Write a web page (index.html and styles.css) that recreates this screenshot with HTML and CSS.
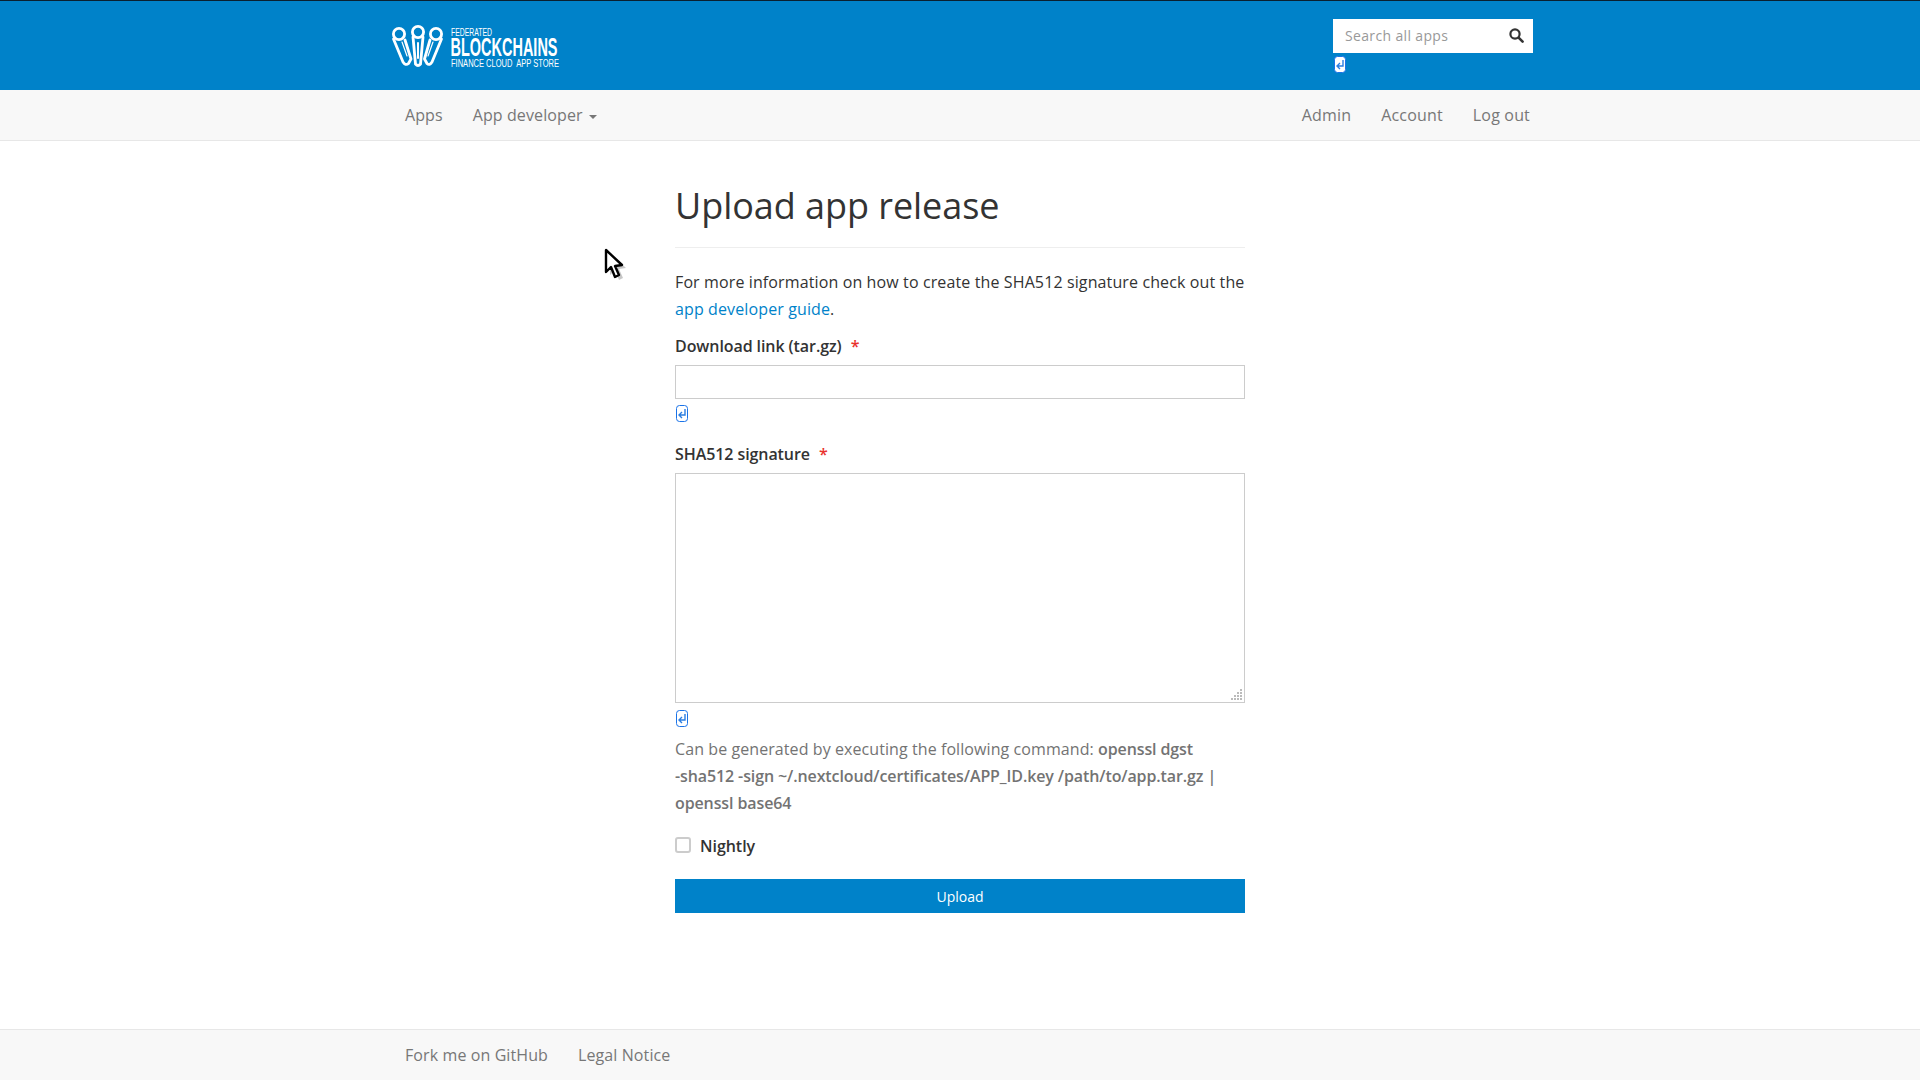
FILE: index.html
```html
<!DOCTYPE html>
<html lang="en">
<head>
<meta charset="utf-8">
<title>Upload app release</title>
<link rel="stylesheet" href="styles.css">
</head>
<body>
<header class="brand">
  <div class="container brand-row">
    <svg class="logo" width="220" height="46" viewBox="0 0 220 46" aria-label="Federated Blockchains">
      <g fill="none" stroke="#fff" stroke-width="2.8" stroke-linejoin="round" stroke-linecap="round">
        <circle cx="8" cy="9" r="5.6"/><circle cx="27" cy="7" r="5.6"/><circle cx="45" cy="9" r="5.6"/>
        <path d="M2.5 14 L12 37 Q14.5 41 17.5 38.5 L20 34 L14 15"/>
        <path d="M50.5 14 L41 37 Q38.5 41 36 38.5 L33.5 34 L39 15"/>
        <path d="M22 12 L24.5 39 Q27 42 29.5 39 L32 12"/>
        <path d="M27 18 L27 33" stroke-width="2"/>
        <path d="M11 17 L16 31" stroke-width="1.2"/>
        <path d="M42 17 L37 31" stroke-width="1.2"/>
      </g>
      <g fill="#fff" font-family="'Liberation Sans', sans-serif">
        <text x="60" y="11" font-size="10" textLength="41" lengthAdjust="spacingAndGlyphs">FEDERATED</text>
        <text x="59.5" y="31" font-size="25" font-weight="700" textLength="107" lengthAdjust="spacingAndGlyphs">BLOCKCHAINS</text>
        <text x="60" y="42" font-size="10" textLength="108" lengthAdjust="spacingAndGlyphs" xml:space="preserve">FINANCE CLOUD  APP STORE</text>
      </g>
    </svg>
    <form class="search">
      <div class="search-box">
        <input class="search-input" type="text" placeholder="Search all apps">
        <svg class="search-icon" width="15" height="15" viewBox="0 0 15 15"><circle cx="6" cy="6" r="4.6" fill="none" stroke="#333" stroke-width="2.2"/><path d="M9.6 9.6 L13.6 13.6" stroke="#333" stroke-width="2.6" stroke-linecap="round"/></svg>
      </div>
      <svg class="pm-icon pm-icon-search" width="12" height="17" viewBox="0 0 12 17"><rect x=".5" y=".5" width="11" height="16" rx="3" fill="#fff" stroke="#1a73e8"/><path d="M9 4v6H4M6 7l-3 3 3 3" fill="none" stroke="#2a7de1" stroke-width="1.4"/></svg>
    </form>
  </div>
</header>
<nav class="navbar">
  <div class="container nav-row">
    <ul class="nav">
      <li><a href="#">Apps</a></li>
      <li><a href="#">App developer <span class="caret"></span></a></li>
    </ul>
    <ul class="nav nav-right">
      <li><a href="#">Admin</a></li>
      <li><a href="#">Account</a></li>
      <li><a href="#">Log out</a></li>
    </ul>
  </div>
</nav>
<main class="content">
  <svg class="cursor" width="26" height="36" viewBox="0 0 26 36"><path d="M3 3 L3 25 L8 20 L12 30 L16 28 L12 19 L19 18 Z" fill="#999" opacity=".55" transform="translate(3 2)"/><path d="M2 2 L2 24 L7 19 L11 29 L15 27 L11 18 L18 17 Z" fill="#fff" stroke="#000" stroke-width="2.4" stroke-linejoin="round"/></svg>
  <section class="panel">
    <h1 class="title">Upload app release</h1>
    <p class="intro">For more information on how to create the SHA512 signature check out the <a href="#">app developer guide</a>.</p>
    <form>
      <label class="label">Download link (tar.gz) <span class="req">*</span></label>
      <input class="field" type="text">
      <svg class="pm-icon" width="12" height="17" viewBox="0 0 12 17"><rect x=".5" y=".5" width="11" height="16" rx="3" fill="#fff" stroke="#1a73e8"/><path d="M9 4v6H4M6 7l-3 3 3 3" fill="none" stroke="#2a7de1" stroke-width="1.4"/></svg>
      <label class="label label-gap">SHA512 signature <span class="req">*</span></label>
      <div class="area-wrap">
        <textarea class="area"></textarea>
        <svg class="grip" width="12" height="12" viewBox="0 0 12 12" fill="#bbb"><rect x="9" width="2" height="2"/><rect x="6" y="3" width="2" height="2"/><rect x="9" y="3" width="2" height="2"/><rect x="3" y="6" width="2" height="2"/><rect x="6" y="6" width="2" height="2"/><rect x="9" y="6" width="2" height="2"/><rect y="9" width="2" height="2"/><rect x="3" y="9" width="2" height="2"/><rect x="6" y="9" width="2" height="2"/><rect x="9" y="9" width="2" height="2"/></svg>
      </div>
      <svg class="pm-icon pm-icon-area" width="12" height="17" viewBox="0 0 12 17"><rect x=".5" y=".5" width="11" height="16" rx="3" fill="#fff" stroke="#1a73e8"/><path d="M9 4v6H4M6 7l-3 3 3 3" fill="none" stroke="#2a7de1" stroke-width="1.4"/></svg>
      <p class="help">Can be generated by executing the following command: <b>openssl dgst <span class="nobr">-sha512</span> -sign ~/.nextcloud/certificates/APP_ID.key /path/to/app.tar.gz | openssl base64</b></p>
      <label class="check"><input class="box" type="checkbox"> Nightly</label>
      <button class="upload" type="button">Upload</button>
    </form>
  </section>
</main>
<footer class="footer">
  <div class="container">
    <ul class="nav">
      <li><a href="#">Fork me on GitHub</a></li>
      <li><a href="#">Legal Notice</a></li>
    </ul>
  </div>
</footer>
</body>
</html>
```
FILE: styles.css
```css
* { box-sizing: border-box; }
html, body { height: 100%; }
body {
  margin: 0;
  min-height: 1080px;
  display: flex;
  flex-direction: column;
  font-family: "Open Sans", sans-serif;
  font-size: 16px;
  line-height: 27px;
  color: #333;
  background: #fff;
}
a { color: #0082c9; text-decoration: none; }
.container { width: 1170px; margin: 0 auto; }
.brand { background: #0082c9; border-top: 1px solid #0a2030; height: 90px; flex: none; }
.brand-row { display: flex; justify-content: space-between; padding: 0 12px 0 16px; }
.logo { margin-top: 24px; }
.search { margin-top: 18px; width: 200px; display: flex; flex-direction: column; align-items: flex-start; }
.search-box { width: 200px; height: 34px; background: #fff; display: flex; align-items: center; padding: 0 9px 2px 0; }
.search-input { flex: 1; min-width: 0; height: 32px; border: 0; outline: 0; padding: 0 12px; background: transparent; font: 14px "Open Sans", sans-serif; letter-spacing: .35px; color: #333; }
.search-input::placeholder { color: #999; opacity: 1; }
.pm-icon { display: block; }
.pm-icon-search { margin: 3px 0 0 1px; }
.navbar { background: #f8f8f8; border-bottom: 1px solid #e7e7e7; height: 51px; flex: none; }
.nav-row { display: flex; justify-content: space-between; padding-left: 15px; }
.nav { list-style: none; margin: 0; padding: 0; display: flex; }
.nav a { display: block; padding: 12px 15px; line-height: 26px; color: #777; letter-spacing: .1px; }
.nav-right a { letter-spacing: .17px; }
.caret { display: inline-block; width: 0; height: 0; margin-left: 2px; vertical-align: middle; border-top: 4px solid #777; border-left: 4px solid transparent; border-right: 4px solid transparent; }
.content { flex: 1; position: relative; }
.cursor { position: absolute; left: 604px; top: 107px; }
.panel { width: 570px; margin: 0 auto; }
.title { margin: 0; padding: 40px 0 0; height: 107px; border-bottom: 1px solid #eee; font-size: 36px; line-height: 50px; font-weight: 400; color: #333; letter-spacing: -.05px; }
.intro { margin: 21px 0 0; letter-spacing: .12px; }
.label { display: block; margin-top: 10px; font-weight: 600; line-height: 27px; letter-spacing: -.08px; }
.label-gap { margin-top: 19px; }
.req { color: #e9322d; margin-left: 5px; font-weight: 600; }
.field { display: block; width: 570px; height: 34px; margin-top: 5px; border: 1px solid #ccc; background: #fff; padding: 0 6px; }
.field + .pm-icon { margin: 6px 0 0 1px; }
.area-wrap { position: relative; width: 570px; height: 230px; margin-top: 5px; }
.area { display: block; width: 570px; height: 230px; border: 1px solid #ccc; background: #fff; padding: 6px; resize: none; }
.grip { position: absolute; right: 2px; bottom: 2px; }
.pm-icon-area { margin: 7px 0 0 1px; }
.help { margin: 9px 0 0; color: #737373; letter-spacing: .08px; }
.help b { font-weight: 600; letter-spacing: -.11px; }
.nobr { white-space: nowrap; }
.check { display: flex; align-items: center; gap: 9px; margin-top: 16px; font-weight: 600; letter-spacing: -.04px; }
.box { width: 16px; height: 16px; margin: -3px 0 0; appearance: none; border: 2px solid #ccc; border-radius: 3px; background: #fff; }
.upload { display: block; width: 570px; height: 34px; margin-top: 19px; border: 0; background: #0082c9; color: #fff; font: 14px "Open Sans", sans-serif; }
.footer { flex: none; height: 51px; background: #f8f8f8; border-top: 1px solid #e7e7e7; }
.footer .nav { padding-left: 15px; }
.footer .nav a { padding: 12px 15px 11px; }
```
